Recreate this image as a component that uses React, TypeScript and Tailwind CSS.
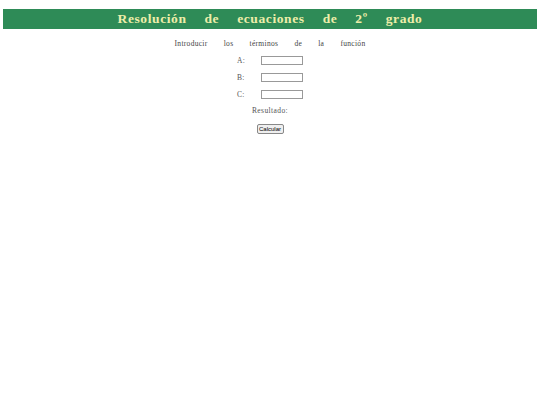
export default function App() {
  const fields = ["A", "B", "C"];

  return (
    <div className="min-h-[405px] bg-white pt-[9px] font-['Liberation_Serif',serif]">
      {/* Title bar */}
      <div className="mx-[3px] flex h-[20px] items-center justify-center bg-[#2e8b57]">
        <h1 className="text-[13.5px] font-bold leading-none tracking-[0.6px] [word-spacing:14px] text-[#eeeeaa]">
          Resolución de ecuaciones de 2º grado
        </h1>
      </div>

      <p className="mt-[10px] text-center text-[7.5px] leading-[10px] tracking-[0.3px] [word-spacing:14px] text-[#444]">
        Introducir los términos de la función
      </p>

      {/* Inputs */}
      <div className="mt-[3px] flex flex-col items-center">
        {fields.map((f) => (
          <div key={f} className="flex h-[17px] w-[66px] items-center">
            <label className="w-[24px] text-[7.5px] leading-none tracking-[0.3px] text-[#555]">{f}:</label>
            <input
              type="text"
              className="h-[9px] w-[42px] border border-[#999] bg-white"
            />
          </div>
        ))}
      </div>

      <p className="mt-[3px] text-center text-[7.5px] leading-[10px] tracking-[0.4px] text-[#555]">
        Resultado:
      </p>

      <div className="mt-[8px] flex justify-center">
        <button className="flex h-[10px] w-[27px] items-center justify-center rounded-[2px] border border-[#888] bg-[#efefef] font-['Liberation_Sans',sans-serif] text-[6px] leading-none text-black">
          Calcular
        </button>
      </div>
    </div>
  );
}
